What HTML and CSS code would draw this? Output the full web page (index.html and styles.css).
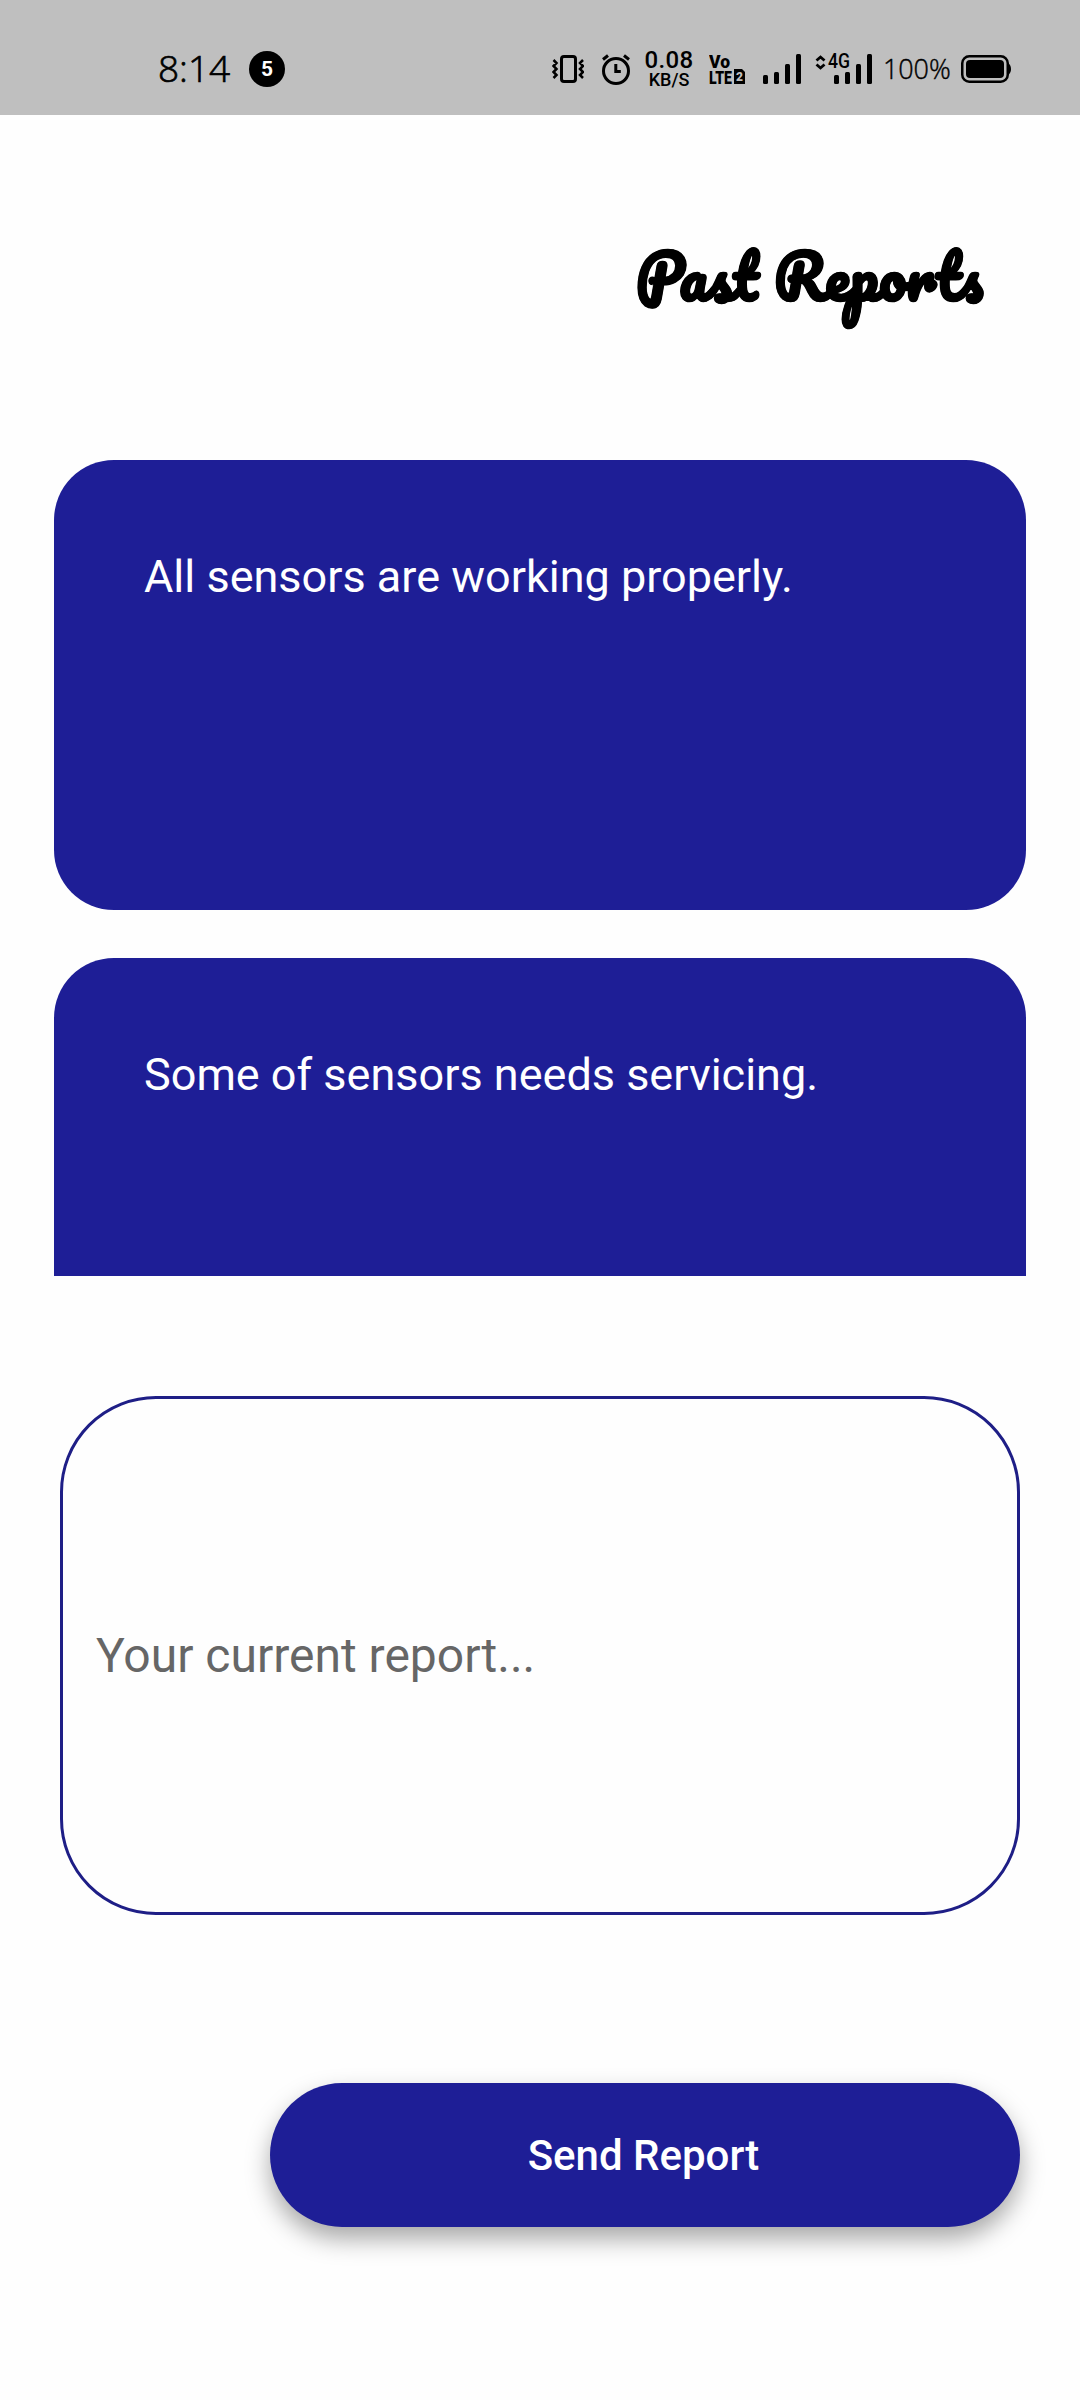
FILE: index.html
```html
<!DOCTYPE html>
<html lang="en">
<head>
<meta charset="utf-8">
<title>Past Reports</title>
<link rel="stylesheet" href="styles.css">
</head>
<body>
<header class="status">
  <span class="time">8:14</span>
  <span class="count">5</span>
  <div class="indicators">
    <svg width="32" height="46" viewBox="552 46 32 46" fill="none" stroke="#000" stroke-width="3">
      <rect x="561.5" y="56.500" width="14" height="25" rx="2.500"/>
      <path stroke-width="2.500" d="M553.500 60l3 3-3 3 3 3-3 3 3 3-3 3M583 60l-3 3 3 3-3 3 3 3-3 3 3 3"/>
    </svg>
    <svg width="32" height="46" viewBox="600 46 32 46" fill="none" stroke="#000" stroke-width="3">
      <circle cx="616" cy="71" r="12.500"/>
      <path d="M603 59.500l5-4M629 59.500l-5-4M615.800 64v7.500h5"/>
    </svg>
    <div class="speed"><span class="rate">0.08</span><span class="unit">KB/S</span></div>
    <svg class="volte" width="37" height="46" viewBox="709 46 37 46">
      <text class="bold" x="709" y="68" font-size="19" textLength="21" lengthAdjust="spacingAndGlyphs">Vo</text>
      <text class="bold" x="709" y="84" font-size="19" textLength="23" lengthAdjust="spacingAndGlyphs">LTE</text>
      <path d="M734 69h8l3 3v12h-11z"/>
      <text class="bold" x="736" y="81" font-size="12" fill="#bfbfbf">2</text>
    </svg>
    <svg class="signal" width="38" height="46" viewBox="763 46 38 46">
      <rect x="763" y="75" width="5" height="9" rx="1.500"/><rect x="774" y="72" width="5" height="12" rx="1.500"/><rect x="785" y="64" width="5" height="20" rx="1.500"/><rect x="796" y="54" width="5" height="30" rx="1.500"/>
    </svg>
    <svg class="signal-4g" width="58" height="46" viewBox="815 46 58 46">
      <path d="M816.500 60.500l4-3.500 4 3.500M816.500 64.500l4 3.500 4-3.500" fill="none" stroke="#000" stroke-width="2.800"/>
      <text class="net" x="828" y="68" textLength="22" lengthAdjust="spacingAndGlyphs">4G</text>
      <rect x="834" y="75" width="5" height="9" rx="1.500"/><rect x="845" y="72" width="5" height="12" rx="1.500"/><rect x="856" y="64" width="5" height="20" rx="1.500"/><rect x="867" y="54" width="5" height="30" rx="1.500"/>
    </svg>
    <span class="percent">100%</span>
    <svg width="51" height="46" viewBox="960 46 51 46">
      <rect x="962.250" y="56.250" width="45.500" height="25.500" rx="7" fill="none" stroke="#000" stroke-width="2.500"/>
      <rect x="966" y="60" width="38" height="18" rx="4"/>
      <path d="M1008 63q3 2 3 6t-3 6z"/>
    </svg>
  </div>
</header>
<main class="screen">
  <h1 class="title">Past Reports</h1>
  <section class="reports">
    <article class="card">All sensors are working properly.</article>
    <article class="card">Some of sensors needs servicing.</article>
  </section>
  <div class="entry">Your current report...</div>
  <button class="send">Send Report</button>
</main>
</body>
</html>
```

FILE: styles.css
```css
* { box-sizing: border-box; }
body {
  margin: 0;
  width: 1080px;
  height: 2400px;
  overflow: hidden;
  background: #fefefe;
  color: #000;
  font-family: Roboto, sans-serif;
}
.status {
  display: flex;
  align-items: center;
  height: 115px;
  padding: 23px 69px 0 158px;
  background: #bfbfbf;
}
.time {
  width: 91px;
  padding-bottom: 2px;
  font: 300 37px/44px "Open Sans", sans-serif;
  -webkit-text-stroke: 0.7px #000;
}
.count {
  width: 36px;
  height: 36px;
  border-radius: 50%;
  background: #000;
  color: #fff;
  font: 700 21px/37px Roboto, sans-serif;
  text-align: center;
}
.indicators {
  display: flex;
  align-items: center;
  margin-left: auto;
}
.indicators svg { display: block; }
.indicators svg:first-child { margin-right: 16px; }
.speed {
  display: flex;
  flex-direction: column;
  align-items: center;
  width: 52px;
  margin: 0 12px 0 11px;
}
.rate { font-size: 24px; font-weight: 500; line-height: 21px; letter-spacing: 0.3px; }
.unit { font-size: 18px; font-weight: 500; line-height: 18px; }
.volte { margin: 0 17px 0 2px; }
.bold { font-family: Roboto, sans-serif; font-weight: 900; }
.signal { margin-right: 14px; }
.net { font: 500 20px Roboto, sans-serif; }
.percent {
  width: 69px;
  margin: 0 8px 0 10px;
  font: 300 27px/46px "Open Sans", sans-serif;
  letter-spacing: -0.100px;
  -webkit-text-stroke: 0.4px #000;
}
.screen {
  display: flex;
  flex-direction: column;
  padding: 111px 54px 0;
}
.title {
  align-self: flex-end;
  width: 346px;
  height: 100px;
  margin: 0 44px 134px 0;
  font: bold 60px/100px Pacifico, Lobster, cursive;
  -webkit-text-stroke: 0.8px #000;
  white-space: nowrap;
}
.reports {
  display: flex;
  flex-direction: column;
  gap: 48px;
  height: 816px;
  overflow: hidden;
}
.card {
  flex: none;
  height: 450px;
  padding: 90px;
  border-radius: 60px;
  background: #1e1e96;
  color: #fff;
  font-size: 45px;
  line-height: 53px;
}
.entry {
  height: 519px;
  margin: 120px 6px 0;
  padding: 0 33px;
  border: 3px solid #1e1e86;
  border-radius: 96px;
  color: #666;
  font-size: 48px;
  line-height: 513px;
}
.send {
  align-self: flex-end;
  width: 750px;
  height: 144px;
  margin: 168px 6px 0 0;
  padding: 1px 3px 0 0;
  border: 0;
  border-radius: 72px;
  background: #1e1e96;
  box-shadow: 0 12px 24px rgba(0, 0, 0, 0.34);
  color: #fff;
  font: 500 42px/143px Roboto, sans-serif;
}
```
